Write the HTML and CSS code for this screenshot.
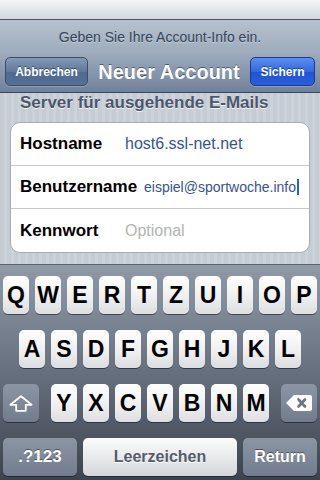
FILE: index.html
```html
<!DOCTYPE html>
<html lang="de">
<head>
<meta charset="utf-8">
<title>Neuer Account</title>
<link rel="stylesheet" href="styles.css">
</head>
<body>
<div class="screen">
  <div class="status"></div>
  <header class="nav">
    <p class="prompt">Geben Sie Ihre Account-Info ein.</p>
    <div class="navrow">
      <button class="btn cancel">Abbrechen</button>
      <h1 class="title">Neuer Account</h1>
      <button class="btn save">Sichern</button>
    </div>
  </header>
  <main class="content">
    <h2 class="section">Server für ausgehende E-Mails</h2>
    <div class="group">
      <div class="row">
        <span class="label">Hostname</span>
        <span class="value">host6.ssl-net.net</span>
      </div>
      <div class="row">
        <span class="label">Benutzername</span>
        <span class="value edit"><span class="small">eispiel@sportwoche.info</span><span class="cursor"></span></span>
      </div>
      <div class="row">
        <span class="label">Kennwort</span>
        <span class="value placeholder">Optional</span>
      </div>
    </div>
  </main>
  <div class="keyboard">
    <div class="krow r1">
      <span class="key">Q</span><span class="key">W</span><span class="key">E</span><span class="key">R</span><span class="key">T</span><span class="key">Z</span><span class="key">U</span><span class="key">I</span><span class="key">O</span><span class="key">P</span>
    </div>
    <div class="krow r2">
      <span class="key">A</span><span class="key">S</span><span class="key">D</span><span class="key">F</span><span class="key">G</span><span class="key">H</span><span class="key">J</span><span class="key">K</span><span class="key">L</span>
    </div>
    <div class="krow r3">
      <span class="key fn wide">
        <svg width="24" height="17" viewBox="0 0 24 17"><path d="M12 1.2 L22.6 9.8 H16.8 V15.8 H7.2 V9.8 H1.4 Z" fill="none" stroke="#fff" stroke-width="1.8" stroke-linejoin="round"/></svg>
      </span>
      <div class="letters">
        <span class="key">Y</span><span class="key">X</span><span class="key">C</span><span class="key">V</span><span class="key">B</span><span class="key">N</span><span class="key">M</span>
      </div>
      <span class="key fn wide">
        <svg width="26" height="16" viewBox="0 0 26 16"><path d="M8 0 H24 A2 2 0 0 1 26 2 V14 A2 2 0 0 1 24 16 H8 L0 8 Z" fill="#fff"/><path d="M12.5 4.5 L19 11.5 M19 4.5 L12.5 11.5" stroke="#6c7585" stroke-width="2.6" stroke-linecap="round"/></svg>
      </span>
    </div>
    <div class="krow r4">
      <span class="key fn mode">.?123</span>
      <span class="key space">Leerzeichen</span>
      <span class="key fn ret">Return</span>
    </div>
  </div>
</div>
</body>
</html>
```
FILE: styles.css
```css
* { box-sizing: border-box; }
html, body { margin: 0; padding: 0; }
body { font-family: "Liberation Sans", Arial, Helvetica, sans-serif; }

.screen {
  width: 320px;
  height: 480px;
  overflow: hidden;
  display: flex;
  flex-direction: column;
  background: repeating-linear-gradient(90deg, #c5ccd4 0 4px, #cbd2d9 4px 7px);
}

.status {
  height: 20px;
  flex: none;
  background: linear-gradient(#f3f5f7, #d3d9df);
  border-bottom: 1px solid #4a5668;
}

.nav {
  flex: none;
  height: 73px;
  padding: 9px 0 6px;
  background: linear-gradient(#b6c1ce, #9eacbd 45%, #6f819a);
  border-bottom: 1px solid #3b4658;
}

.prompt {
  margin: 0;
  height: 16px;
  line-height: 16px;
  font-size: 14px;
  color: #34425a;
  text-align: center;
  text-shadow: 0 1px 0 rgba(255,255,255,0.35);
}

.navrow {
  margin-top: 12px;
  height: 29px;
  display: flex;
  align-items: center;
  padding: 0 5px;
}

.btn {
  height: 29px;
  border-radius: 5px;
  font-family: inherit;
  font-size: 12px;
  font-weight: bold;
  color: #fff;
  text-shadow: 0 -1px 0 rgba(0,0,0,0.45);
  padding: 0;
  flex: none;
}
.cancel {
  width: 83px;
  border: 1px solid #3d4d66;
  background: linear-gradient(#8599b7, #5f789c 50%, #4f698f 51%, #557097);
  box-shadow: 0 1px 0 rgba(255,255,255,0.2);
}
.save {
  width: 65px;
  border: 1px solid #1d3b86;
  background: linear-gradient(#5a8ef0, #3468de 50%, #2054d2 51%, #2a5fdc);
  box-shadow: 0 1px 0 rgba(255,255,255,0.2);
}

.title {
  flex: 1;
  margin: 0;
  text-align: center;
  font-size: 20px;
  font-weight: bold;
  color: #fff;
  line-height: 24px;
  text-shadow: 0 -1px 0 rgba(0,0,0,0.45);
}

.content {
  flex: 1;
}

.section {
  margin: 0;
  padding-left: 20px;
  line-height: 20px;
  height: 20px;
  font-size: 17px;
  font-weight: bold;
  color: #4c566c;
  text-shadow: 0 1px 0 rgba(255,255,255,0.8);
}

.group {
  margin: 9px 10px 0 10px;
  background: #fff;
  border: 1px solid #a7abb3;
  border-radius: 10px;
}

.row {
  height: 43px;
  display: flex;
  align-items: center;
  padding-left: 9px;
  border-bottom: 1px solid #c8c8c8;
}
.row:last-child { border-bottom: none; }

.label {
  min-width: 105px;
  font-size: 17px;
  font-weight: bold;
  color: #000;
  white-space: nowrap;
}

.value {
  flex: 1;
  font-size: 16px;
  color: #385487;
  white-space: nowrap;
  overflow: hidden;
}

.edit {
  display: flex;
  justify-content: flex-end;
  align-items: center;
  padding-right: 10px;
}
.small { font-size: 14px; }
.cursor {
  display: inline-block;
  width: 2px;
  height: 16px;
  background: #2c5fc0;
  margin-left: 1px;
}

.placeholder { color: #b3b3b3; }

.keyboard {
  flex: none;
  height: 216px;
  padding-top: 11px;
  border-top: 1px solid #5b6371;
  background: linear-gradient(#8f99a8, #747d8c 35%, #565e6b 70%, #3c434e);
  display: flex;
  flex-direction: column;
  gap: 15px;
}

.krow {
  display: flex;
  height: 39px;
  flex: none;
  gap: 6px;
}
.r1 { padding-left: 3px; }
.r2 { justify-content: center; }
.r3 { justify-content: space-between; padding: 0 3px; }
.r4 { padding: 0 3px; }

.letters { display: flex; gap: 6px; }

.key {
  width: 26px;
  height: 38px;
  border-radius: 5px;
  background: linear-gradient(#fefefe, #f1f1f2 50%, #dddee1);
  box-shadow: 0 1px 0 rgba(20,25,35,0.6);
  display: flex;
  align-items: center;
  justify-content: center;
  font-size: 23px;
  font-weight: bold;
  color: #000;
}

.fn {
  background: linear-gradient(#8c95a4, #737c8c);
  color: #fff;
  font-size: 17px;
  text-shadow: 0 -1px 0 rgba(0,0,0,0.45);
}
.wide { width: 36px; }
.mode { width: 74px; }
.ret { width: 74px; font-size: 16px; }
.space {
  width: 154px;
  font-size: 16px;
  color: #545c6a;
  text-shadow: 0 1px 0 #fff;
  background: linear-gradient(#fbfbfb, #e9eaec 50%, #d3d5d9);
}
```
